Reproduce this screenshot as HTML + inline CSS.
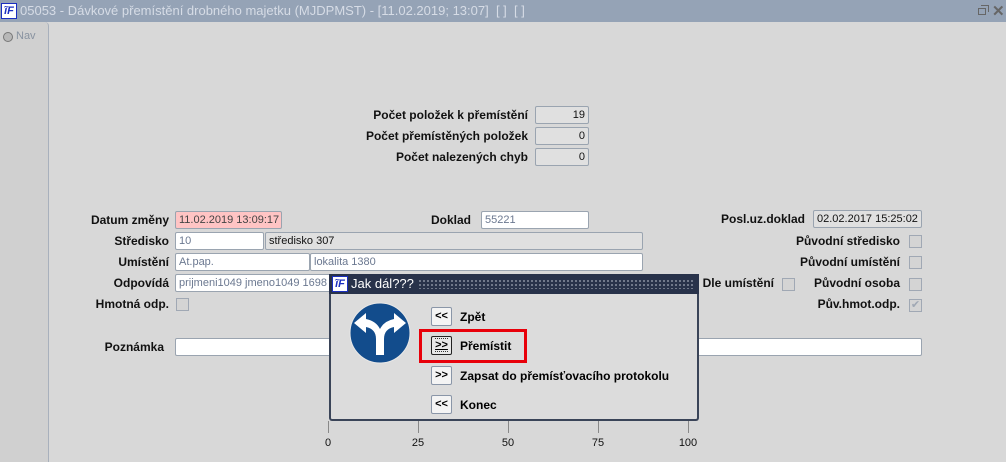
<!DOCTYPE html>
<html><head><meta charset="utf-8"><style>
*{margin:0;padding:0;box-sizing:border-box}
body{width:1006px;height:462px;background:#d8d8d8;position:relative;overflow:hidden;font-family:"Liberation Sans",sans-serif;font-size:12px}
.a{position:absolute}
.l{position:absolute;font-weight:bold;color:#111;text-align:right;white-space:nowrap;line-height:18px}
.f{position:absolute;height:18px;border:1px solid #9aa4b0;border-radius:2px;background:#fff;color:#6b7890;line-height:16px;padding-left:3px;white-space:nowrap;overflow:hidden;font-size:11px}
.g{background:#e0e0e0;color:#111}
.cb{position:absolute;width:13px;height:13px;border:1px solid #a0a8b4;background:#d4d4d4}
.btn{position:absolute;left:431px;width:21px;height:19px;border:1px solid #8a96a8;border-radius:2px;background:#f4f4f4;font-weight:bold;font-size:11px;text-align:center;line-height:16px}
.bl{position:absolute;left:460px;font-weight:bold;font-size:12px;line-height:18px}
.tk{position:absolute;top:421px;width:1px;height:12px;background:#888}
.tn{position:absolute;top:437px;font-size:11px;color:#111;width:30px;text-align:center}
</style></head><body>
<div class="a" style="left:0;top:0;width:1006px;height:22px;background:#95a3b6"></div>
<div class="a" style="left:1px;top:3px;width:16px;height:16px;background:#fff;border:1px solid #1a2ec0;color:#1a2ec0;font:bold italic 11px 'Liberation Sans';line-height:14px;text-align:center">ĩF</div>
<div class="a" style="left:20px;top:3px;color:#d6dce6;font-size:13px;line-height:16px;white-space:nowrap">05053 - Dávkové přemístění drobného majetku (MJDPMST) - [11.02.2019; 13:07]&nbsp; [ ]&nbsp; [ ]</div>
<div class="a" style="left:978px;top:8px;width:8px;height:7px;border:1px solid #666"></div>
<div class="a" style="left:981px;top:5px;width:8px;height:7px;border-top:1px solid #666;border-right:1px solid #666"></div>
<div class="a" style="left:992px;top:2px;color:#666;font-size:15px;font-weight:bold">✕</div>
<div class="a" style="left:0;top:22px;width:49px;height:440px;background:#d0d0d0;border-right:1px solid #a8b0bc;border-radius:0 4px 0 0"></div>
<div class="a" style="left:3px;top:32px;width:10px;height:10px;border-radius:50%;border:1px solid #777;background:#b8b8b8"></div>
<div class="a" style="left:16px;top:30px;color:#8892a0;font-size:11px">Nav</div>

<div class="l" style="right:478px;top:106px">Počet položek k přemístění</div>
<div class="l" style="right:478px;top:127px">Počet přemístěných položek</div>
<div class="l" style="right:478px;top:148px">Počet nalezených chyb</div>
<div class="f g" style="left:535px;top:106px;width:54px;text-align:right;padding-right:3px">19</div>
<div class="f g" style="left:535px;top:127px;width:54px;text-align:right;padding-right:3px">0</div>
<div class="f g" style="left:535px;top:148px;width:54px;text-align:right;padding-right:3px">0</div>

<div class="l" style="right:837px;top:211px">Datum změny</div>
<div class="f" style="left:175px;top:211px;width:107px;background:#ffc4c4;color:#444">11.02.2019 13:09:17</div>
<div class="l" style="right:535px;top:211px">Doklad</div>
<div class="f" style="left:481px;top:211px;width:108px">55221</div>
<div class="l" style="right:201px;top:210px">Posl.uz.doklad</div>
<div class="f g" style="left:813px;top:210px;width:109px;color:#111">02.02.2017 15:25:02</div>

<div class="l" style="right:837px;top:232px">Středisko</div>
<div class="f" style="left:175px;top:232px;width:89px">10</div>
<div class="f g" style="left:265px;top:232px;width:378px">středisko 307</div>
<div class="l" style="right:837px;top:253px">Umístění</div>
<div class="f" style="left:175px;top:253px;width:135px">At.pap.</div>
<div class="f" style="left:310px;top:253px;width:333px">lokalita 1380</div>
<div class="l" style="right:837px;top:274px">Odpovídá</div>
<div class="f" style="left:175px;top:274px;width:160px">prijmeni1049 jmeno1049 1698</div>
<div class="l" style="right:837px;top:295px">Hmotná odp.</div>
<div class="cb" style="left:176px;top:298px"></div>

<div class="l" style="right:106px;top:232px">Původní středisko</div>
<div class="cb" style="left:909px;top:235px"></div>
<div class="l" style="right:106px;top:253px">Původní umístění</div>
<div class="cb" style="left:909px;top:256px"></div>
<div class="l" style="right:232px;top:274px">Dle umístění</div>
<div class="cb" style="left:782px;top:278px"></div>
<div class="l" style="right:106px;top:274px">Původní osoba</div>
<div class="cb" style="left:909px;top:278px"></div>
<div class="l" style="right:106px;top:295px">Pův.hmot.odp.</div>
<div class="cb" style="left:909px;top:299px;color:#a0a8b4;font-size:11px;line-height:11px;text-align:center">✔</div>

<div class="l" style="right:842px;top:338px">Poznámka</div>
<div class="f" style="left:175px;top:338px;width:747px"></div>

<div class="a" style="left:329px;top:274px;width:370px;height:147px;background:#dcdcdc;border:2px solid #3a4458;border-top:none;border-radius:0 0 3px 3px"></div>
<div class="a" style="left:329px;top:274px;width:370px;height:20px;background:#28324a"></div>
<div class="a" style="left:418px;top:279px;width:277px;height:10px;background-image:radial-gradient(#8890a0 0.8px,transparent 1px);background-size:4px 4px"></div>
<div class="a" style="left:332px;top:276px;width:16px;height:16px;background:#fff;border:1px solid #1a2ec0;color:#1a2ec0;font:bold italic 11px 'Liberation Sans';line-height:14px;text-align:center">ĩF</div>
<div class="a" style="left:351px;top:276px;color:#fff;font-size:13px;line-height:16px">Jak dál???</div>
<svg class="a" style="left:348px;top:301px" width="64" height="64" viewBox="0 0 64 64">
<circle cx="32" cy="32" r="30" fill="#124c8c" stroke="#e8e8e8" stroke-width="1"/>
<path d="M28 54 V38 Q28 28 18 26 L18 32 L6 22 L18 12 L18 18 Q28 20 32 28 Q36 20 46 18 L46 12 L58 22 L46 32 L46 26 Q36 28 36 38 V54 Z" fill="#fff"/>
</svg>
<div class="btn" style="top:307px">&lt;&lt;</div>
<div class="bl" style="top:308px">Zpět</div>
<div class="a" style="left:419px;top:329px;width:108px;height:34px;border:3px solid #e8000a"></div>
<div class="btn" style="top:336px;border:1px solid #222;background:#e8e8e8"><span style="border-top:1px dotted #333;border-bottom:1px dotted #333;text-decoration:underline">&gt;&gt;</span></div>
<div class="bl" style="top:337px">Přemístit</div>
<div class="btn" style="top:366px">&gt;&gt;</div>
<div class="bl" style="top:367px">Zapsat do přemísťovacího protokolu</div>
<div class="btn" style="top:395px">&lt;&lt;</div>
<div class="bl" style="top:396px">Konec</div>

<div class="tk" style="left:328px"></div><div class="tk" style="left:418px"></div><div class="tk" style="left:508px"></div><div class="tk" style="left:598px"></div><div class="tk" style="left:688px"></div>
<div class="tn" style="left:313px">0</div><div class="tn" style="left:403px">25</div><div class="tn" style="left:493px">50</div><div class="tn" style="left:583px">75</div><div class="tn" style="left:673px">100</div>
</body></html>
